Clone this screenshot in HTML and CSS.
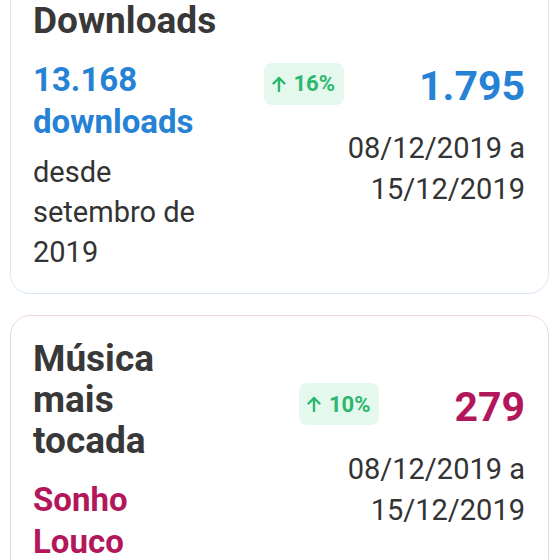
FILE: index.html
```html
<!DOCTYPE html>
<html lang="pt-BR">
<head>
<meta charset="UTF-8">
<meta name="viewport" content="width=device-width, initial-scale=1.0">
<title>Estatísticas</title>
<link rel="stylesheet" href="styles.css">
</head>
<body>
<main class="stats-list">
    <section class="card card-blue">
        <div class="card-left">
            <h2 class="card-title">Downloads</h2>
            <p class="card-value">13.168 downloads</p>
            <p class="card-desc">desde setembro de 2019</p>
        </div>
        <div class="card-right">
            <div class="card-stat">
                <span class="badge">
                    <svg class="badge-arrow" viewBox="0 0 14 16" width="14" height="16"><path d="M7 15V2M1.5 7.5L7 2l5.5 5.5" fill="none" stroke="currentColor" stroke-width="2.4" stroke-linecap="round" stroke-linejoin="round"/></svg>
                    16%
                </span>
                <span class="stat-value">1.795</span>
            </div>
            <p class="card-period">08/12/2019 a 15/12/2019</p>
        </div>
    </section>

    <section class="card card-pink">
        <div class="card-left">
            <h2 class="card-title">Música mais tocada</h2>
            <p class="card-value">Sonho Louco</p>
        </div>
        <div class="card-right">
            <div class="card-stat">
                <span class="badge">
                    <svg class="badge-arrow" viewBox="0 0 14 16" width="14" height="16"><path d="M7 15V2M1.5 7.5L7 2l5.5 5.5" fill="none" stroke="currentColor" stroke-width="2.4" stroke-linecap="round" stroke-linejoin="round"/></svg>
                    10%
                </span>
                <span class="stat-value">279</span>
            </div>
            <p class="card-period">08/12/2019 a 15/12/2019</p>
        </div>
    </section>
</main>
</body>
</html>
```

FILE: styles.css
```css
body {
    font-family: Roboto, "Noto Sans", sans-serif;
    background-color: #fff;
    color: #333;
    margin: 0;
    padding: 0;
}
.stats-list {
    display: flex;
    flex-direction: column;
    gap: 21px;
    margin-top: -23px;
    padding: 0 11px 0 10px;
}
.card {
    display: flex;
    align-items: center;
    padding: 22px 23px 21px 22px;
    border: 1px solid #d8e7f5;
    border-radius: 20px;
    background-color: #fff;
}
.card-pink {
    border-color: #f1d6df;
}
.card-left {
    width: 180px;
    flex-shrink: 0;
}
.card-pink .card-left {
    padding-bottom: 12px;
}
.card-title {
    margin: 0 0 18px;
    font-size: 37px;
    line-height: 41px;
    font-weight: bold;
    color: #383838;
}
.card-value {
    margin: 0;
    font-size: 33px;
    line-height: 42px;
    font-weight: bold;
}
.card-blue .card-value,
.card-blue .stat-value {
    color: #2582d4;
}
.card-pink .card-value,
.card-pink .stat-value {
    color: #b3175b;
}
.card-desc {
    margin: 9px 0 0;
    font-size: 29px;
    line-height: 40px;
}
.card-right {
    margin-left: auto;
    text-align: right;
}
.card-stat {
    display: flex;
    align-items: center;
    justify-content: flex-end;
    gap: 75px;
    height: 48px;
}
.badge {
    display: flex;
    align-items: center;
    gap: 8px;
    height: 42px;
    padding: 0 9px 0 8px;
    margin-bottom: 5px;
    border-radius: 8px;
    background-color: #e4f8ed;
    color: #2bb86d;
    font-size: 22px;
    font-weight: bold;
}
.badge-arrow {
    display: block;
}
.stat-value {
    font-size: 41px;
    line-height: 48px;
    font-weight: bold;
}
.card-period {
    width: 200px;
    margin: 18px 0 0 auto;
    font-size: 29px;
    line-height: 41px;
}
```
